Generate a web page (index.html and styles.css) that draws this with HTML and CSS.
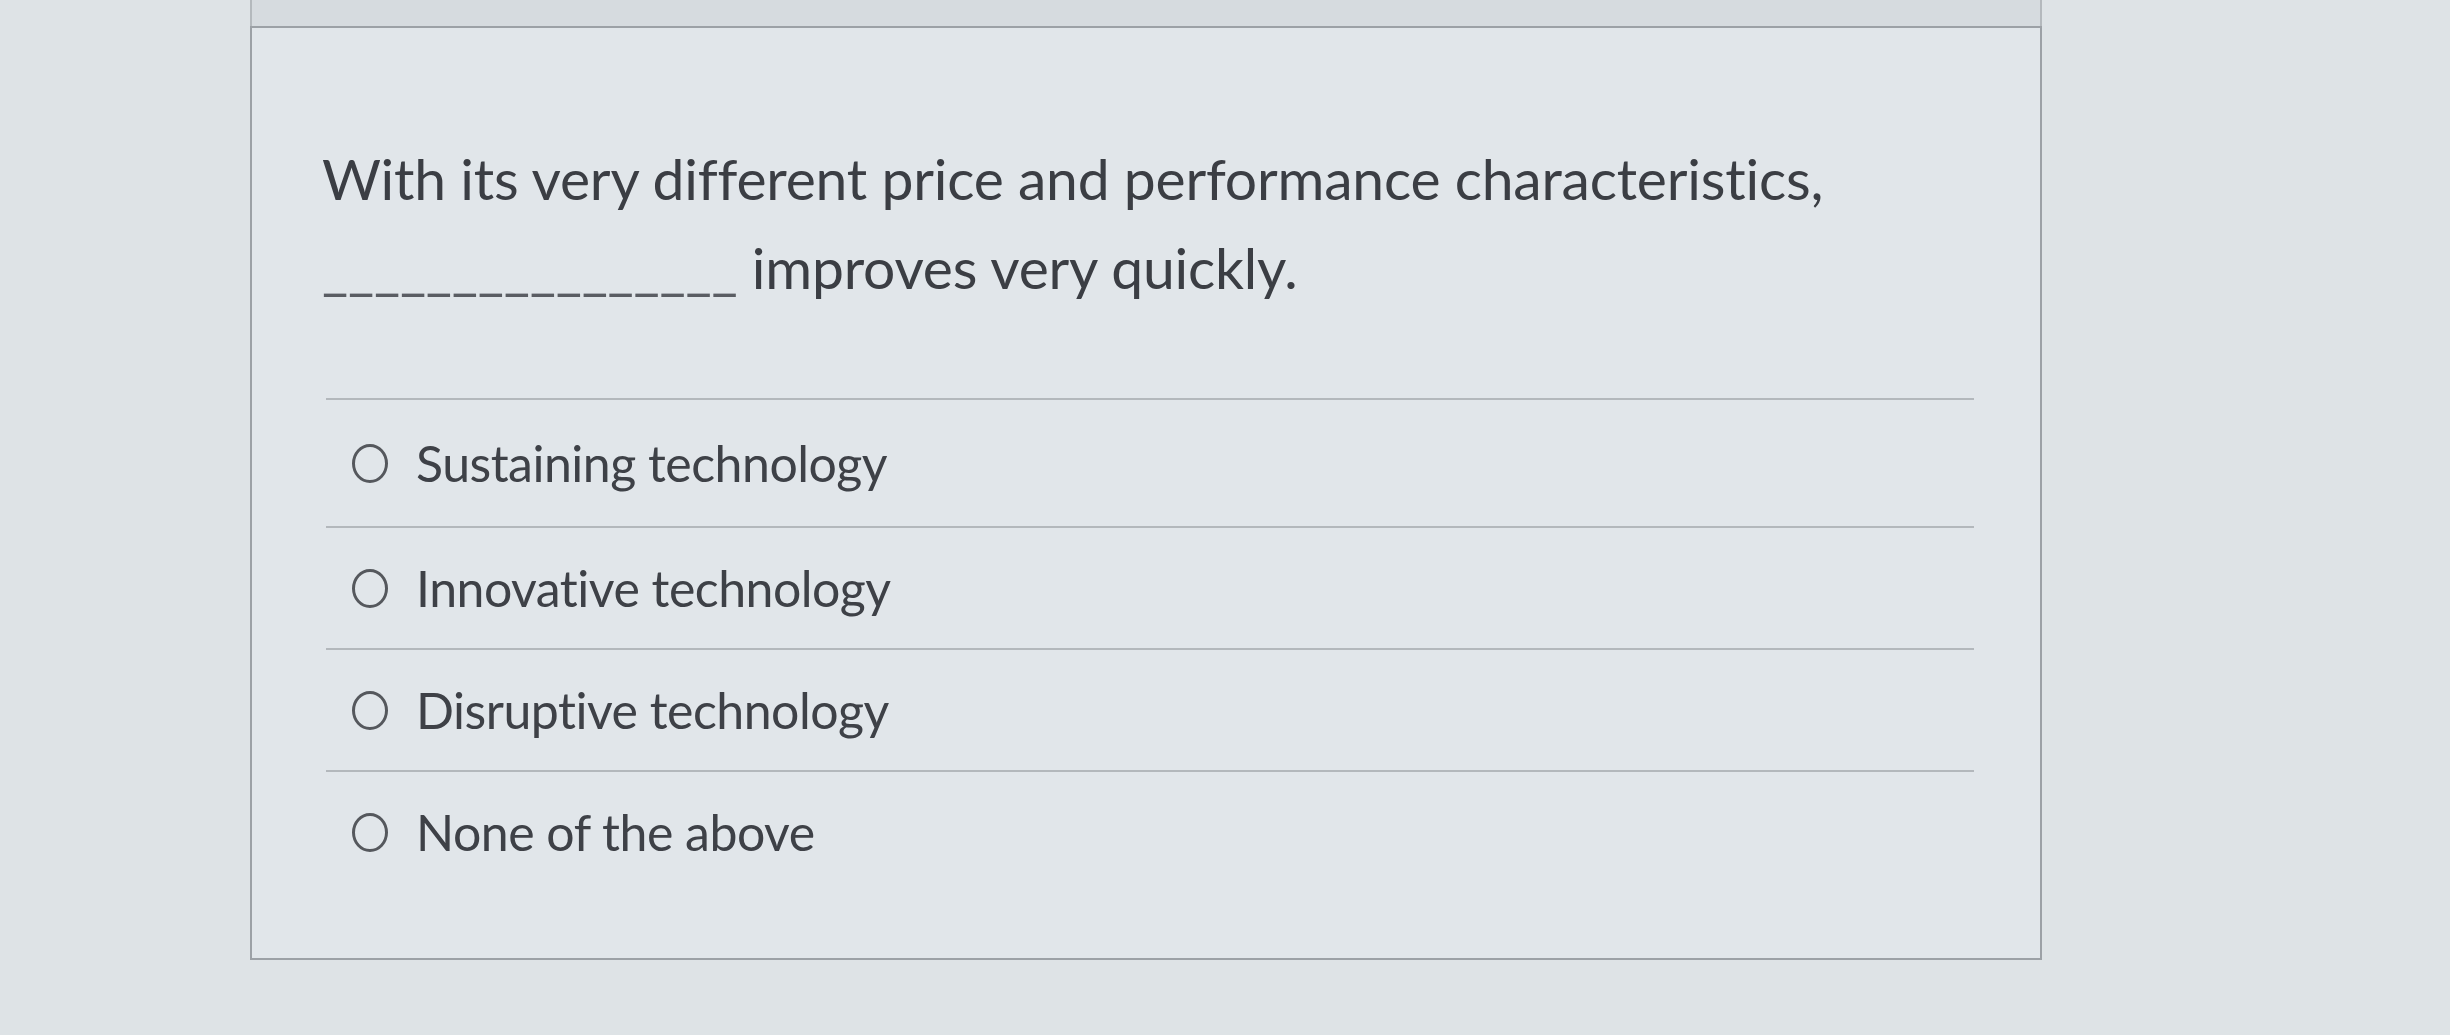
FILE: index.html
```html
<!DOCTYPE html>
<html>
<head>
<meta charset="utf-8">
<link rel="stylesheet" href="styles.css">
</head>
<body>
<div class="page">
  <div class="topband"></div>
  <div class="card">
    <div class="question">
      <p>With its very different price and performance characteristics,<br><span class="blank">________________</span> improves very quickly.</p>
    </div>
    <ul class="options">
      <li class="option"><span class="radio"></span><span class="label">Sustaining technology</span></li>
      <li class="option"><span class="radio"></span><span class="label">Innovative technology</span></li>
      <li class="option"><span class="radio"></span><span class="label">Disruptive technology</span></li>
      <li class="option"><span class="radio"></span><span class="label">None of the above</span></li>
    </ul>
  </div>
</div>
</body>
</html>
```
FILE: styles.css
```css
html, body {
  margin: 0;
  padding: 0;
}
body {
  width: 2450px;
  height: 1035px;
  background: #dee3e6;
  font-family: Lato, "Open Sans", "Liberation Sans", sans-serif;
  color: #3e4147;
  overflow: hidden;
}
.page {
  margin-left: 250px;
  width: 1792px;
}
.topband {
  height: 26px;
  background: #d6dbdf;
  border-left: 2px solid #b4b9bd;
  border-right: 2px solid #b4b9bd;
}
.card {
  background: #e1e6ea;
  border: 2px solid #9ca1a6;
  height: 934px;
  box-sizing: border-box;
  padding: 106px 66px 0 74px;
}
.question p {
  margin: 0 0 0 -4px;
  font-size: 57px;
  line-height: 89px;
  color: #3b3e44;
  letter-spacing: -0.2px;
}
.blank {
  color: #5a5d63;
  letter-spacing: -0.2px;
}
.options {
  list-style: none;
  margin: 86px 0 0 0;
  padding: 0;
}
.option {
  display: flex;
  align-items: center;
  gap: 28px;
  height: 122px;
  border-top: 2px solid #b3b8bc;
  padding: 0 0 0 26px;
  box-sizing: border-box;
}
.option:first-child {
  height: 128px;
}
.radio {
  width: 36px;
  height: 39px;
  border: 3px solid #55585d;
  border-radius: 50%;
  box-sizing: border-box;
  flex: none;
}
.label {
  font-size: 50px;
  letter-spacing: -0.5px;
  color: #3e4147;
}
```
